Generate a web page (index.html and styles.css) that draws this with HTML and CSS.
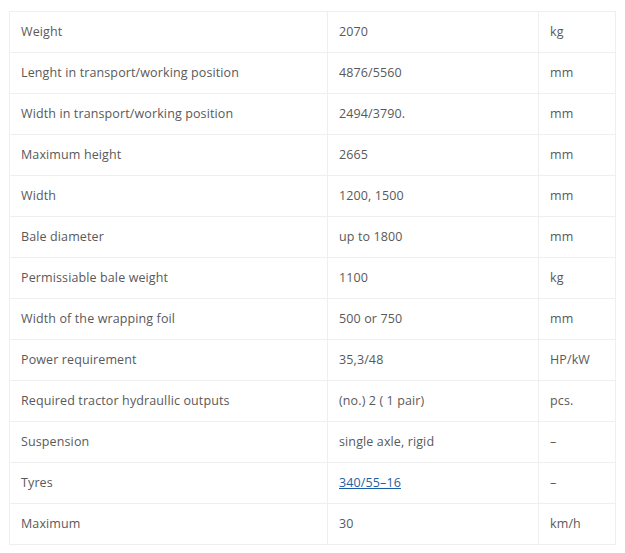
FILE: index.html
```html
<!DOCTYPE html>
<html>
<head>
<meta charset="utf-8">
<link rel="stylesheet" href="styles.css">
</head>
<body>
<table class="spec">
<tr><td class="c1">Weight</td><td class="c2">2070</td><td class="c3">kg</td></tr>
<tr><td class="c1">Lenght in transport/working position</td><td class="c2">4876/5560</td><td class="c3">mm</td></tr>
<tr><td class="c1">Width in transport/working position</td><td class="c2">2494/3790.</td><td class="c3">mm</td></tr>
<tr><td class="c1">Maximum height</td><td class="c2">2665</td><td class="c3">mm</td></tr>
<tr><td class="c1">Width</td><td class="c2">1200, 1500</td><td class="c3">mm</td></tr>
<tr><td class="c1">Bale diameter</td><td class="c2">up to 1800</td><td class="c3">mm</td></tr>
<tr><td class="c1">Permissiable bale weight</td><td class="c2">1100</td><td class="c3">kg</td></tr>
<tr><td class="c1">Width of the wrapping foil</td><td class="c2">500 or 750</td><td class="c3">mm</td></tr>
<tr><td class="c1">Power requirement</td><td class="c2">35,3/48</td><td class="c3">HP/kW</td></tr>
<tr><td class="c1">Required tractor hydraullic outputs</td><td class="c2">(no.) 2 ( 1 pair)</td><td class="c3">pcs.</td></tr>
<tr><td class="c1">Suspension</td><td class="c2">single axle, rigid</td><td class="c3">–</td></tr>
<tr><td class="c1">Tyres</td><td class="c2"><a class="link" href="#">340/55–16</a></td><td class="c3">–</td></tr>
<tr><td class="c1">Maximum</td><td class="c2">30</td><td class="c3">km/h</td></tr>
</table>
</body>
</html>
```
FILE: styles.css
```css
html, body {
  margin: 0;
  padding: 0;
  background: #fff;
}
body {
  padding: 11px 0 0 9px;
  font-family: "Open Sans", "DejaVu Sans", sans-serif;
  font-size: 12.5px;
  letter-spacing: 0.12px;
  color: #595959;
}
.spec {
  border-collapse: collapse;
  width: 606px;
  table-layout: fixed;
}
.spec td {
  border: 1px solid #efefef;
  height: 40px;
  padding: 0 0 2px 11px;
  box-sizing: border-box;
  vertical-align: middle;
  white-space: nowrap;
}
.spec tr { height: 41px; }
.c1 { width: 318px; }
.c2 { width: 211px; }
.c3 { width: 77px; }
.link {
  color: #1d5fa6;
  text-decoration: underline;
}
```
